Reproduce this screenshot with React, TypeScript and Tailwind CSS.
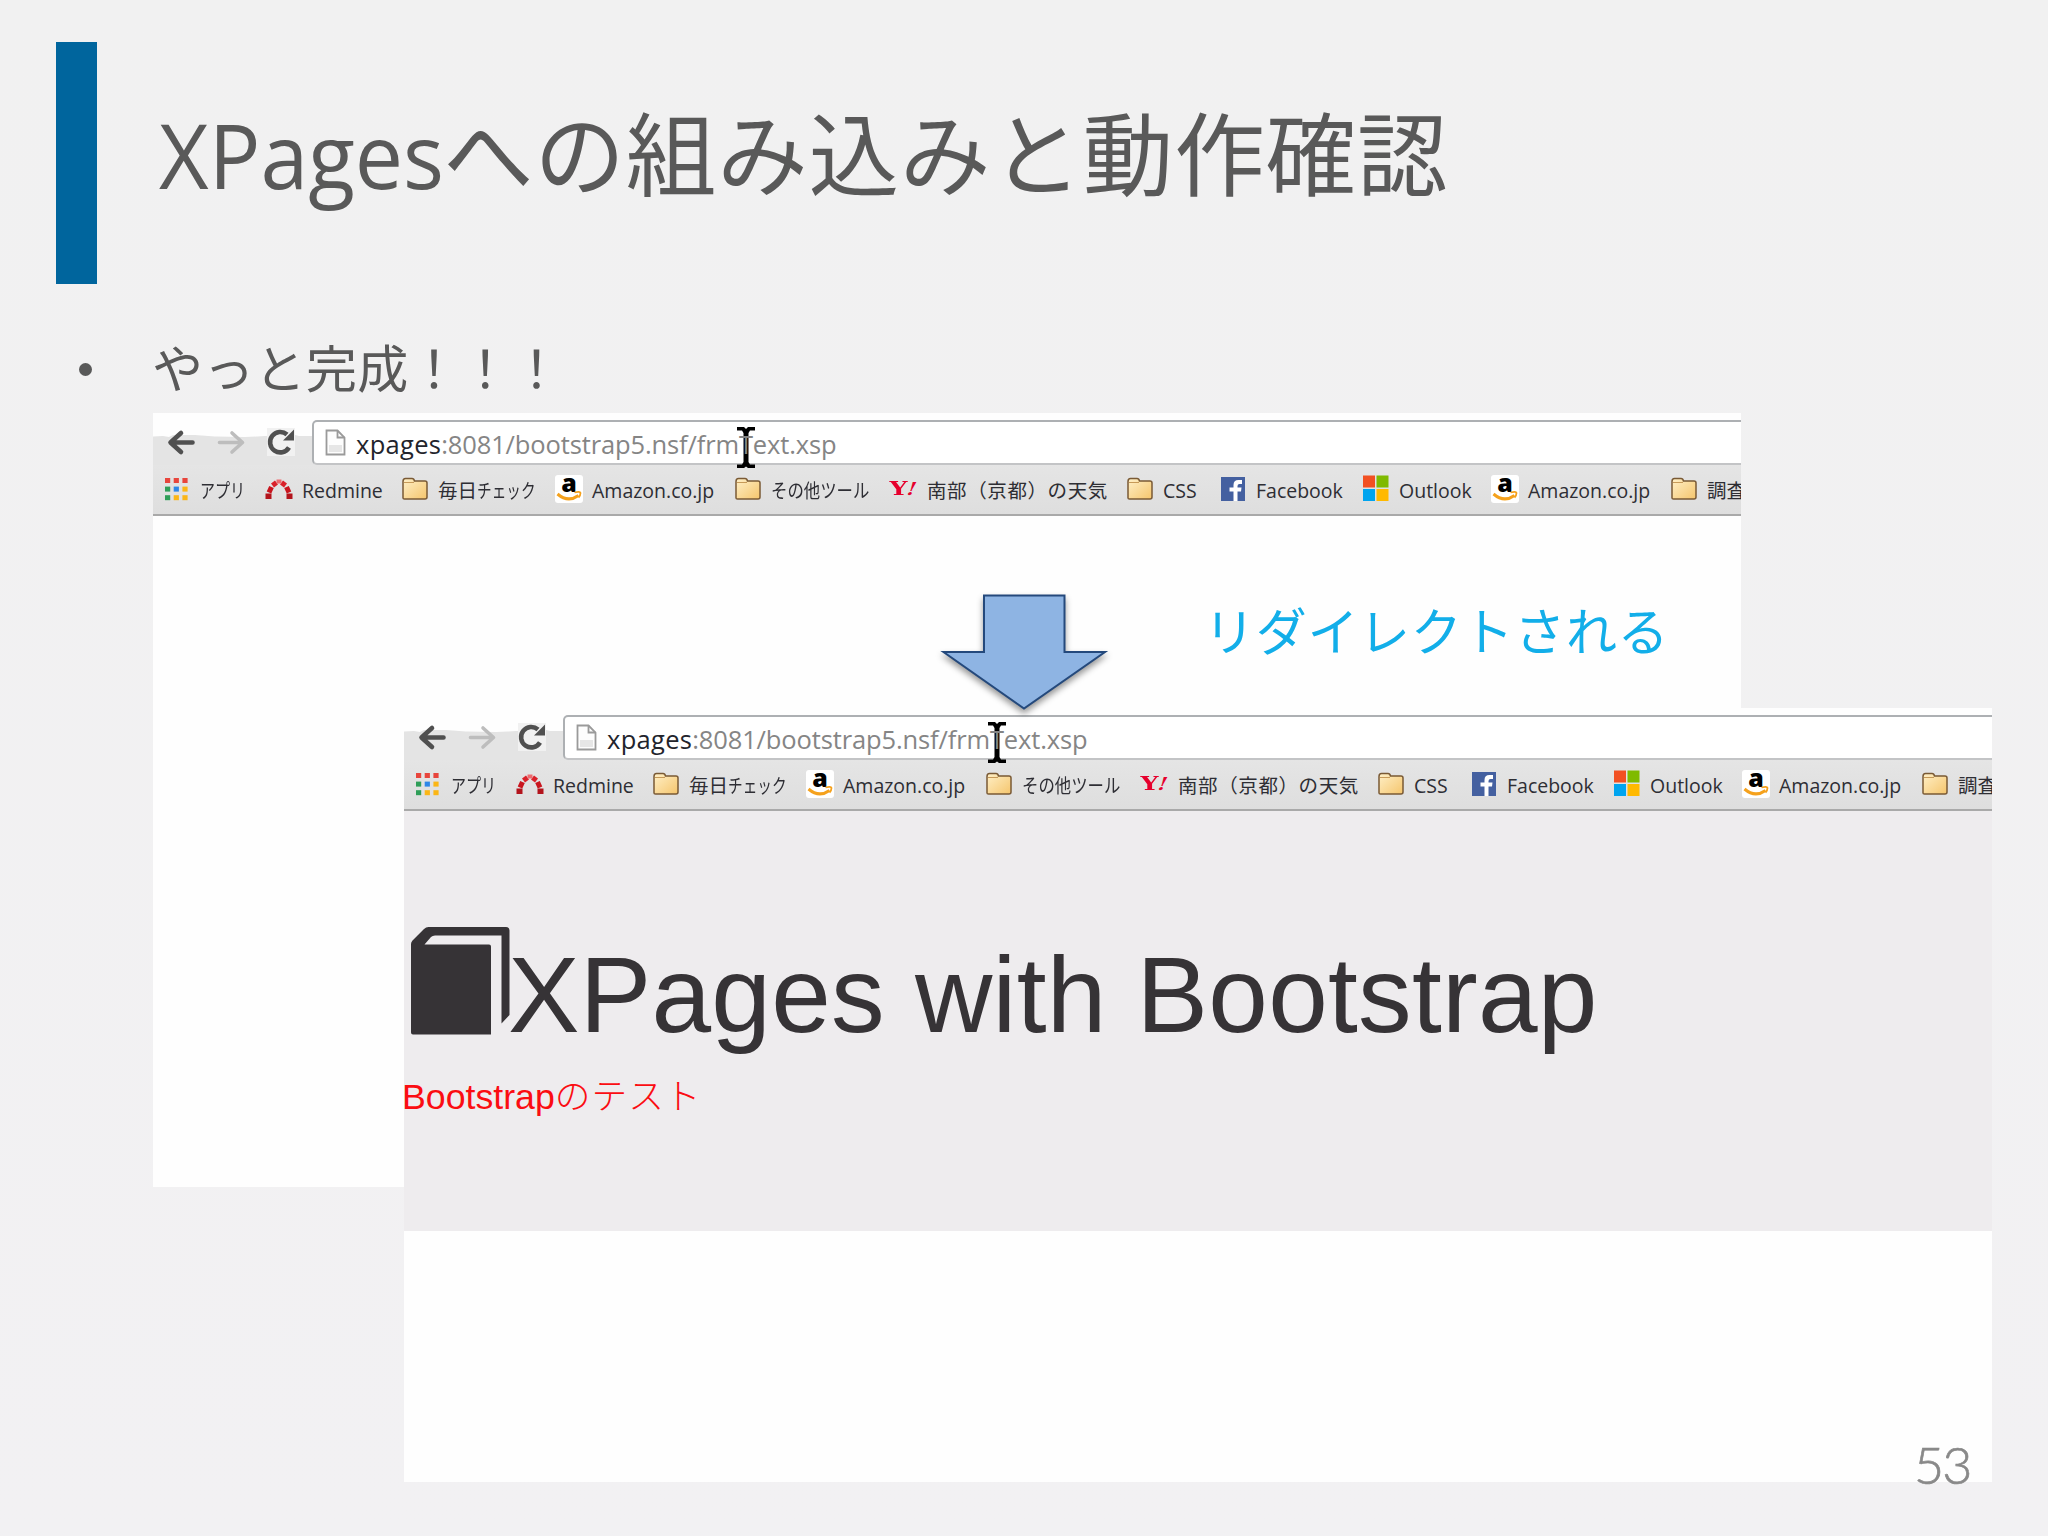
import type { ReactNode } from 'react';

type IconName = 'apps' | 'redmine' | 'folder' | 'amazon' | 'yahoo' | 'facebook' | 'microsoft';

type Bookmark = {
  icon: IconName;
  width: string;
  label: ReactNode;
};

const bookmarks: Bookmark[] = [
  { icon: 'apps', width: 'w-[102px]', label: <span className="inline-block origin-left scale-x-[0.77]">アプリ</span> },
  { icon: 'redmine', width: 'w-[136px]', label: 'Redmine' },
  {
    icon: 'folder',
    width: 'w-[154px]',
    label: (
      <>
        毎日<span className="inline-block origin-left scale-x-[0.75]">チェック</span>
      </>
    ),
  },
  { icon: 'amazon', width: 'w-[179px]', label: 'Amazon.co.jp' },
  { icon: 'folder', width: 'w-[156px]', label: <span className="inline-block origin-left scale-x-[0.84]">その他ツール</span> },
  { icon: 'yahoo', width: 'w-[236px]', label: <span className="tracking-[0.600px]">南部（京都）の天気</span> },
  { icon: 'folder', width: 'w-[93px]', label: 'CSS' },
  { icon: 'facebook', width: 'w-[143px]', label: 'Facebook' },
  { icon: 'microsoft', width: 'w-[129px]', label: 'Outlook' },
  { icon: 'amazon', width: 'w-[179px]', label: 'Amazon.co.jp' },
  { icon: 'folder', width: 'w-[80px]', label: '調査' },
];

const appColors = ['#e8453c', '#e8453c', '#e8453c', '#2f9e58', '#2d87e8', '#fbb616', '#2f9e58', '#fbb616', '#fbb616'];

function BookmarkIcon({ name }: { name: IconName }) {
  switch (name) {
    case 'apps':
      return (
        <svg className="h-7 w-7 shrink-0" viewBox="0 0 28 28">
          {appColors.map((color, i) => (
            <rect key={i} x={2 + (i % 3) * 8.7} y={3 + Math.floor(i / 3) * 8.6} width="5.2" height="5" fill={color} />
          ))}
        </svg>
      );
    case 'redmine':
      return (
        <svg className="h-7 w-7 shrink-0" viewBox="0 0 28 28">
          <path d="M3.500 24V18.500M24.500 24V18.500" stroke="#b3141c" strokeWidth="6" />
          <path d="M4 17.500L6.500 12M24 17.500L21.500 12" stroke="#c9151e" strokeWidth="5" />
          <path d="M7.500 10.500L11.500 7.500M20.500 10.500L16.500 7.500" stroke="#d9212a" strokeWidth="5" />
          <path d="M11.500 6.500H16.500" stroke="#ee6a6e" strokeWidth="4" />
        </svg>
      );
    case 'folder':
      return (
        <svg className="h-7 w-7 shrink-0" viewBox="0 0 28 28">
          <defs>
            <linearGradient id="folder" x1="0" y1="0" x2="1" y2="1">
              <stop offset="0" stopColor="#fff0c8" />
              <stop offset="1" stopColor="#f5c56c" />
            </linearGradient>
          </defs>
          <path
            d="M2 23V6.500Q2 3.500 4.500 3.500H11Q13 3.500 13.500 6H24Q26 6 26 8V22Q26 24 24 24H3.500Q2 24 2 23Z"
            fill="url(#folder)"
            stroke="#7a5a35"
            strokeWidth="1.5"
          />
          <path d="M3 7.500H13" stroke="#c79a58" strokeWidth="1" />
        </svg>
      );
    case 'amazon':
      return (
        <span className="relative flex h-7 w-7 shrink-0 justify-center rounded-[3px] bg-white">
          <span className="-mt-[7px] font-['Open_Sans',sans-serif] text-[25px] leading-[28px] font-extrabold text-black">a</span>
          <svg className="absolute inset-0" viewBox="0 0 28 28">
            <path d="M2.500 19Q13 28 23.500 20.500" fill="none" stroke="#f5a11c" strokeWidth="3" />
            <path d="M19.500 17.500Q25 16 25.500 18Q25.500 20.500 23.500 22.500" fill="none" stroke="#f5a11c" strokeWidth="1.8" />
          </svg>
        </span>
      );
    case 'yahoo':
      return (
        <span className="flex h-7 w-7 shrink-0 items-center justify-center font-['DejaVu_Serif',serif] text-[18px] font-bold text-[#e6002d]">
          <span className="scale-x-[1.4]">Y</span>
          <span className="ml-[3px] -skew-x-[20deg] scale-x-[1.1]">!</span>
        </span>
      );
    case 'facebook':
      return (
        <svg className="h-7 w-7 shrink-0" viewBox="0 0 28 28">
          <rect x="2" y="2" width="24" height="24" fill="#4460a0" />
          <path d="M14.500 26V16.500H10.500V12.500H14.500V10Q14.500 5 19.500 5H23V9H20.500Q18.500 9 18.500 11V12.500H22.500L22 16.500H18.500V26Z" fill="#fff" />
        </svg>
      );
    case 'microsoft':
      return (
        <svg className="h-7 w-7 shrink-0" viewBox="0 0 28 28">
          <rect x="1" y="0.500" width="12" height="12" fill="#f25022" />
          <rect x="14.500" y="0.500" width="12" height="12" fill="#7fba00" />
          <rect x="1" y="14" width="12" height="12" fill="#00a4ef" />
          <rect x="14.500" y="14" width="12" height="12" fill="#ffb900" />
        </svg>
      );
  }
}

function NavButtons() {
  return (
    <svg className="h-[45px] w-[159px] shrink-0" viewBox="0 0 159 45">
      {/* uneven upper edge of the toolbar */}
      <path d="M0 16.500L10 16L16 17L20 15L42 15L62 16.500L92 17L104 16.500L112 16L142 15L146 16L159 16V45H0Z" fill="#e4e4e4" />
      <rect x="114" y="8" width="28" height="28" fill="#f1f1f1" />
      <path d="M18 22.500H39.500M28 13L17.500 22.500L28 32" fill="none" stroke="#505050" strokeWidth="4.600" strokeLinejoin="round" strokeLinecap="round" />
      <path d="M66.500 22.500H88.500M79 13L89.500 22.500L79 32" fill="none" stroke="#bdbdbd" strokeWidth="3.600" strokeLinejoin="round" strokeLinecap="round" />
      <path d="M136 27.500A10.200 10.200 0 1 1 134 14.500" fill="none" stroke="#505050" strokeWidth="4.600" />
      <path d="M141 9.500V20.500H130Z" fill="#505050" />
    </svg>
  );
}

function BrowserWindow({ children }: { children?: ReactNode }) {
  return (
    <div className="flex h-[774px] w-[1588px] flex-col overflow-hidden bg-[#fefefe]">
      <div className="flex h-[52px] shrink-0 items-end bg-gradient-to-b from-[#fefefe] from-85% to-[#e4e4e4] to-85%">
        <NavButtons />
        <div className="relative -mr-2 flex h-[45px] flex-1 items-center rounded-[5px] border-2 border-[#adb0b3] border-b-[#c3c4c6] bg-white pl-[11px]">
          <svg className="h-[27px] w-[21px] shrink-0" viewBox="0 0 21 27">
            <path d="M1.500 1.500H12.500L19.500 8.500V25.500H1.500Z" fill="#fdfdfd" stroke="#9a9a9a" strokeWidth="1.800" />
            <path d="M12.500 1.500V8.500H19.500" fill="none" stroke="#9a9a9a" strokeWidth="1.800" />
            <rect x="4" y="16" width="13" height="7" fill="#e6e6e6" />
          </svg>
          <svg className="absolute top-[5px] left-[423px] h-[41px] w-[18px]" viewBox="0 0 18 41">
            <path d="M0 0H7L9 2L11 0H18V3.500H13L11.500 6V35L13 37.500H18V41H11L9 39.500L7 41H0V37.500H5L6.500 35V6L5 3.500H0Z" fill="#000" />
          </svg>
          <span className="relative mt-[4px] ml-[10px] font-['Open_Sans',sans-serif] text-[25.500px] tracking-[-0.130px] whitespace-nowrap text-[#858585]">
            <span className="tracking-[0.300px] text-[#22242c]">xpages</span>:8081/bootstrap5.nsf/frmText.xsp
          </span>
        </div>
      </div>
      <div className="flex h-[51px] shrink-0 items-center border-b-2 border-[#a9a9a9] bg-gradient-to-b from-[#e5e5e5] to-[#dedede] pb-[2px] pl-[10px]">
        {bookmarks.map((bookmark, i) => (
          <div key={i} className={`flex shrink-0 items-center gap-[9px] ${bookmark.width}`}>
            <BookmarkIcon name={bookmark.icon} />
            <span className="mt-[5px] font-['Open_Sans','Noto_Sans_CJK_JP',sans-serif] text-[19.500px] leading-[28px] whitespace-nowrap text-[#2e2e34]">
              {bookmark.label}
            </span>
          </div>
        ))}
      </div>
      {children}
    </div>
  );
}

function Jumbotron() {
  return (
    <div className="h-[420px] shrink-0 bg-[#eeecee] pt-[112px]">
      <h2 className="flex items-start font-['Liberation_Sans',sans-serif] text-[107.200px] leading-[118px] tracking-[0.250px] whitespace-nowrap text-[#363336]">
        <svg className="mt-[4px] ml-[7px] h-[108px] w-[99px] shrink-0" viewBox="0 0 99 108">
          <path
            d="M0 17Q0 15 1.500 13.500L13 2Q15 0 17.500 0H95Q98.500 0 98.500 3.500V88L90.500 96.500V8.500H24Q21.500 8.500 20 10L13.500 17.500H78Q80 17.500 80 19.500V107.500H2Q0 107.500 0 105.500Z"
            fill="#363336"
          />
        </svg>
        <span className="mt-[13px] -ml-[2px]">XPages with Bootstrap</span>
      </h2>
      <p className="mt-[16px] -ml-[2px] font-['Liberation_Sans','Noto_Sans_CJK_JP',sans-serif] text-[35.700px] leading-[54px] font-light whitespace-nowrap text-[#fb0d12]">
        Bootstrap<span className="tracking-[1px]">のテスト</span>
      </p>
    </div>
  );
}

export default function App() {
  return (
    <div className="relative h-[1536px] w-[2048px] overflow-hidden bg-gradient-to-b from-[#f1f1f1] to-[#f2f1f3] font-['Open_Sans','Noto_Sans_CJK_JP',sans-serif] text-[#595959]">
      <header className="flex items-start pt-[42px] pl-[56px]">
        <div className="h-[242px] w-[41px] bg-[#00659d]" />
        <h1 className="mt-[47px] ml-[62px] flex text-[90.500px] leading-[130px] whitespace-nowrap">
          <span className="w-[284px]">
            <span className="inline-block origin-left scale-x-[0.95]">XPages</span>
          </span>
          <span className="tracking-[0.900px]">への組み込みと動作確認</span>
        </h1>
      </header>

      <ul className="mt-[48px] pl-[79px]">
        <li className="flex h-[75px] items-center text-[51px] leading-[75px]">
          <span className="h-[13px] w-[13px] rounded-full bg-[#595959]" />
          <span className="-mt-[2px] ml-[60px] tracking-[0.300px]">やっと完成！！！</span>
        </li>
      </ul>

      <div className="mt-[6px] ml-[153px]">
        <BrowserWindow />
      </div>

      <p className="absolute top-[594px] left-[1204px] text-[51px] leading-[75px] tracking-[0.700px] whitespace-nowrap text-[#12aee9]">リダイレクトされる</p>

      <div className="absolute top-[708px] left-[404px]">
        <BrowserWindow>
          <Jumbotron />
        </BrowserWindow>
      </div>

      <svg className="absolute top-[590px] left-[934px] h-[130px] w-[180px] drop-shadow-[0_4px_3px_rgba(0,0,0,0.4)]" viewBox="0 0 180 130">
        <path d="M50 5.500H130.500V62H171L90 118.500L9.500 62H50Z" fill="#8eb4e3" stroke="#24497c" strokeWidth="2" />
      </svg>

      <span className="absolute top-[1432px] left-[1914px] font-['Lato',sans-serif] text-[52px] leading-[64px] font-light tracking-[-2px] text-[#898989] [-webkit-text-stroke:0.700px_#898989]">53</span>
    </div>
  );
}
